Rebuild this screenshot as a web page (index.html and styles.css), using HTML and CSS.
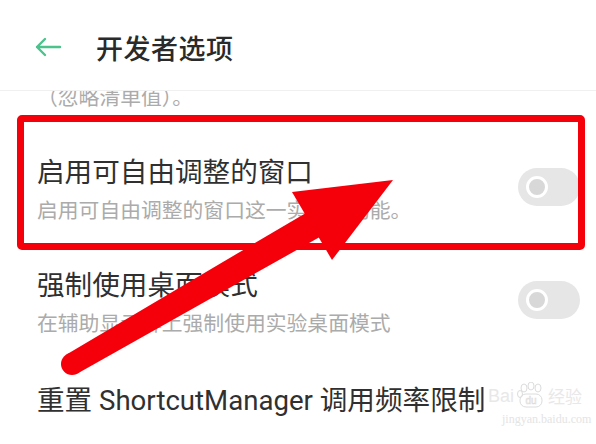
FILE: index.html
```html
<!DOCTYPE html>
<html lang="zh-CN">
<head>
  <meta charset="UTF-8" />
  <title>开发者选项</title>
  <link rel="stylesheet" href="styles.css">
</head>
<body>
  <header class="topbar">
    <svg class="back" width="28" height="20" viewBox="0 0 28 20">
      <path d="M11 2 L3 10 L11 18 M3 10 H26" fill="none" stroke="#4cc38c" stroke-width="2.4" stroke-linecap="round" stroke-linejoin="round"/>
    </svg>
    <h1>开发者选项</h1>
  </header>

  <div class="list">
    <div class="tail">
      <p class="sub">（忽略清单值）。</p>
    </div>

    <div class="item">
      <div class="texts">
        <p class="title">启用可自由调整的窗口</p>
        <p class="sub">启用可自由调整的窗口这一实验性功能。</p>
      </div>
      <span class="switch"><span class="knob"></span></span>
    </div>

    <div class="item">
      <div class="texts">
        <p class="title">强制使用桌面模式</p>
        <p class="sub">在辅助显示屏上强制使用实验桌面模式</p>
      </div>
      <span class="switch"><span class="knob"></span></span>
    </div>

    <div class="item single">
      <div class="texts">
        <p class="title">重置 ShortcutManager 调用频率限制</p>
      </div>
    </div>
  </div>

  <!-- marcas de la captura -->
  <div class="mark-box"></div>

  <svg class="mark-arrow" width="596" height="444" viewBox="0 0 596 444">
    <circle cx="72" cy="364" r="11" fill="#f5000a"/>
    <polygon points="66.5,354.5 311,209.9 325,234.1 77.5,373.5" fill="#f5000a"/>
    <polygon points="393,180 292,192 332,260" fill="#f5000a"/>
  </svg>

  <div class="watermark">
    <div class="wm-top">
      <span>Bai</span>
      <svg width="30" height="26" viewBox="0 0 30 26">
        <ellipse cx="8" cy="6" rx="3" ry="4" fill="none" stroke="#dcdcdc" stroke-width="1"/>
        <ellipse cx="15" cy="4" rx="3" ry="4" fill="none" stroke="#dcdcdc" stroke-width="1"/>
        <ellipse cx="22" cy="6" rx="3" ry="4" fill="none" stroke="#dcdcdc" stroke-width="1"/>
        <ellipse cx="4" cy="12" rx="2.5" ry="3.5" fill="none" stroke="#dcdcdc" stroke-width="1"/>
        <rect x="4" y="12" width="22" height="13" rx="6" fill="none" stroke="#dcdcdc" stroke-width="1"/>
        <text x="15" y="22" font-size="10" text-anchor="middle" fill="none" stroke="#dcdcdc" stroke-width="0.6" font-family="Liberation Sans">du</text>
      </svg>
      <span>经验</span>
    </div>
    <div class="wm-url">jingyan.baidu.com</div>
  </div>
</body>
</html>
```

FILE: styles.css
```css
body {
  margin: 0;
  padding: 0;
  width: 596px;
  height: 444px;
  overflow: hidden;
  background-color: #fff;
  font-family: Roboto, "Noto Sans CJK SC", "Noto Sans", sans-serif;
  position: relative;
}

p {
  margin: 0;
}

.topbar {
  height: 91px;
  border-bottom: 1px solid #f0f0f0;
  display: flex;
  align-items: center;
  padding: 4px 0 0 34px;
  box-sizing: border-box;
  gap: 34px;
}

.topbar h1 {
  margin: 0;
  font-size: 27px;
  font-weight: 500;
  color: #2a2a2a;
  letter-spacing: 0.5px;
}

.list {
  height: 352px;
  overflow: hidden;
}

.tail {
  height: 42px;
  overflow: hidden;
  padding-left: 37px;
}

.tail .sub {
  margin-top: -7px;
}

.item {
  height: 113px;
  display: flex;
  align-items: center;
  justify-content: space-between;
  padding: 0 16px 0 37px;
}

.item.single {
  align-items: flex-start;
  padding-top: 24px;
  box-sizing: border-box;
}

.title {
  font-size: 27.6px;
  line-height: 36px;
  color: #303030;
}

.sub {
  font-size: 20.8px;
  line-height: 28px;
  color: #ababab;
  margin-top: 6px;
}

.switch {
  width: 62px;
  height: 38px;
  border-radius: 19px;
  background-color: #e6e6e6;
  display: flex;
  align-items: center;
  padding-left: 8px;
  box-sizing: border-box;
  margin-top: -6px;
}

.knob {
  width: 22px;
  height: 22px;
  border-radius: 50%;
  border: 3.5px solid #fff;
  background-color: #d8d8d8;
  box-sizing: border-box;
}

.mark-box {
  position: absolute;
  left: 17px;
  top: 115px;
  width: 568px;
  height: 135px;
  border: 7px solid #f5000a;
  border-radius: 5px;
  box-sizing: border-box;
}

.mark-arrow {
  position: absolute;
  left: 0;
  top: 0;
  pointer-events: none;
}

.watermark {
  position: absolute;
  left: 488px;
  top: 382px;
  color: #e8e8e8;
  font-family: "Liberation Sans", sans-serif;
}

.wm-top {
  display: flex;
  align-items: flex-end;
  gap: 2px;
  font-size: 18px;
  line-height: 24px;
}

.wm-top span:last-child {
  font-family: "Noto Sans CJK SC", sans-serif;
  font-size: 17px;
}

.wm-url {
  font-family: "Liberation Serif", serif;
  font-size: 12px;
  color: #e4e4e4;
  margin: 4px 0 0 14px;
}
```
